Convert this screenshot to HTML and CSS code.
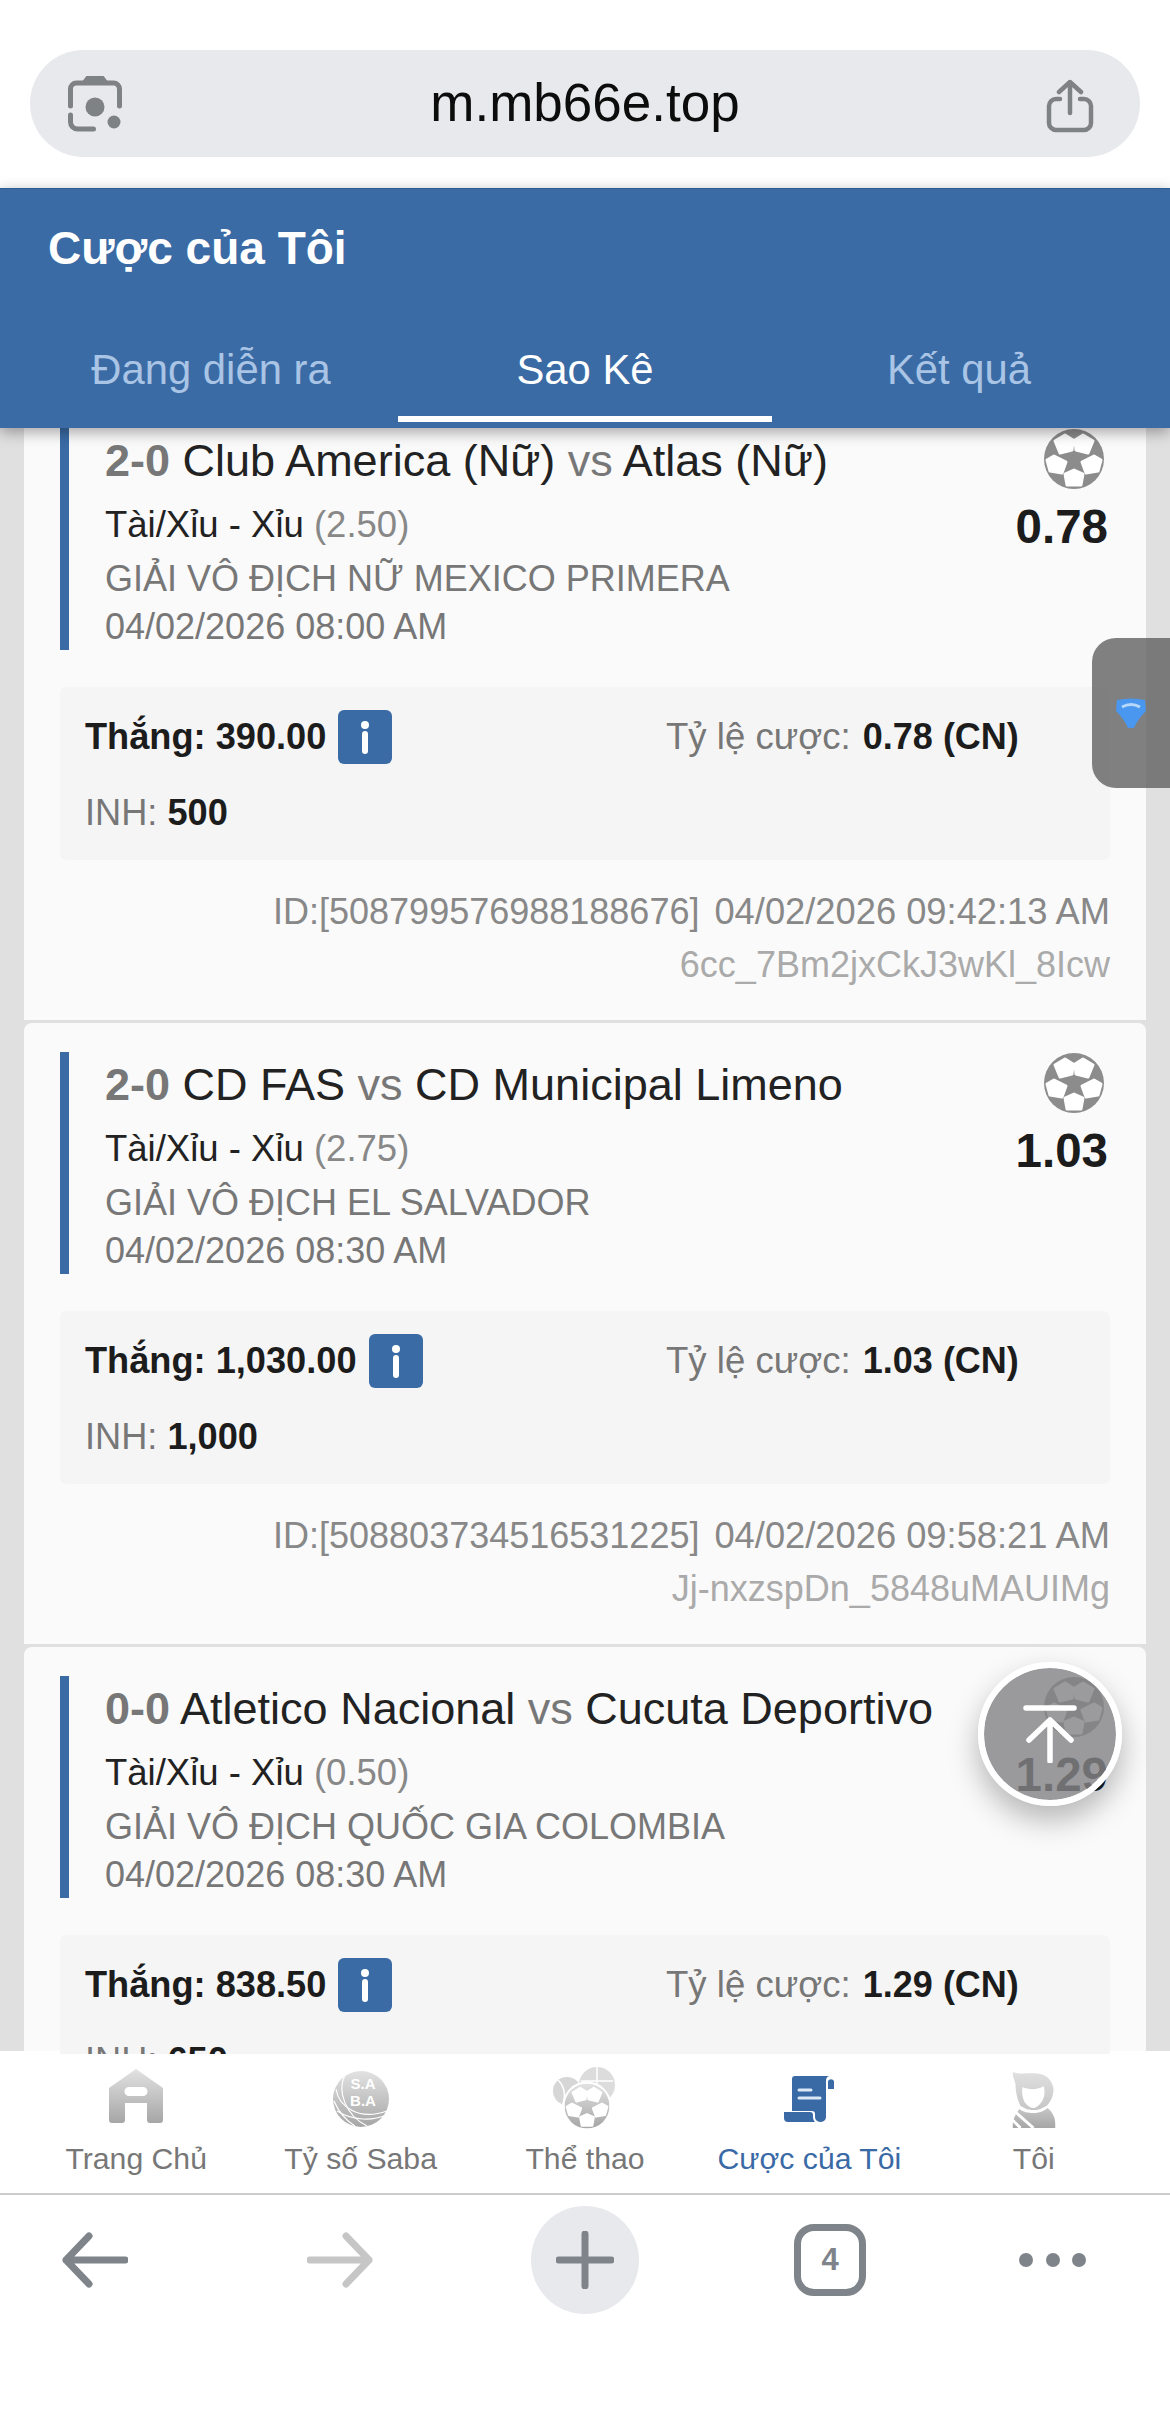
FILE: index.html
```html
<!DOCTYPE html>
<html lang="vi">
<head>
<meta charset="utf-8">
<title>Cược của Tôi</title>
<link rel="stylesheet" href="styles.css">
</head>
<body>
<svg class="defs" aria-hidden="true">
  <defs>
    <linearGradient id="navgrey" x1="0" y1="0" x2="0" y2="1">
      <stop offset="0" stop-color="#e2e2e2"/>
      <stop offset="1" stop-color="#a6a6a6"/>
    </linearGradient>
    <linearGradient id="hairgrey" x1="0" y1="0" x2="0" y2="1">
      <stop offset="0" stop-color="#e0e0e0"/>
      <stop offset="1" stop-color="#c6c6c6"/>
    </linearGradient>
    <linearGradient id="bodygrey" x1="0" y1="0" x2="0" y2="1">
      <stop offset="0" stop-color="#c6c6c6"/>
      <stop offset="1" stop-color="#a6a6a6"/>
    </linearGradient>
    <g id="ball-faces" fill="#fff" stroke="#fff" stroke-width="3" stroke-linejoin="round">
      <polygon points="11,12 21,6 29,11 28,21 16,24"/>
      <polygon points="49,12 39,6 31,11 32,21 44,24"/>
      <polygon points="10,27 3,31 6,42 18,44 22,33"/>
      <polygon points="50,27 57,31 54,42 42,44 38,33"/>
      <polygon points="30,41 21,45 23,56 37,56 39,45"/>
    </g>
    <symbol id="ball" viewBox="0 0 60 60">
      <circle cx="30" cy="30" r="30" fill="#8c8c8c"/>
      <use href="#ball-faces"/>
    </symbol>
    <symbol id="ball-nav" viewBox="0 0 60 60">
      <circle cx="30" cy="30" r="30" fill="url(#navgrey)"/>
      <use href="#ball-faces"/>
    </symbol>
  </defs>
</svg>
<div class="page">
  <div class="browser-top">
    <div class="urlbar">
      <svg class="lens" viewBox="0 0 54 56" fill="none" stroke="#7e8285" stroke-width="5" stroke-linecap="round" stroke-linejoin="round">
        <path d="M2.500 30V13a6 6 0 0 1 6-6h37a6 6 0 0 1 6 6v17"/>
        <path d="M17 6l3-4h14l3 4z" fill="#7e8285"/>
        <path d="M2.500 39v7a7 7 0 0 0 7 7h16"/>
        <circle cx="27" cy="31" r="9.500" fill="#7e8285" stroke="none"/>
        <circle cx="46" cy="46" r="6.500" fill="#7e8285" stroke="none"/>
      </svg>
      <span class="url">m.mb66e.top</span>
      <svg class="share" viewBox="0 0 48 54" fill="none" stroke="#7e8285" stroke-width="4.500" stroke-linecap="round" stroke-linejoin="round">
        <path d="M14 20H10a7 7 0 0 0-7 7v17a7 7 0 0 0 7 7h28a7 7 0 0 0 7-7V27a7 7 0 0 0-7-7h-4"/>
        <path d="M24 34V3M13 13L24 3l11 10"/>
      </svg>
    </div>
  </div>

  <div class="app">
    <header class="app-header">
      <h1 class="app-title">Cược của Tôi</h1>
      <div class="tabs">
        <div class="tab">Đang diễn ra</div>
        <div class="tab tab-active">Sao Kê</div>
        <div class="tab">Kết quả</div>
      </div>
    </header>

    <main class="list">
      <article class="card">
        <div class="match">
          <div class="match-info">
            <div class="teams"><b class="score">2-0</b> Club America (Nữ) <span class="vs">vs</span> Atlas (Nữ)</div>
            <div class="market">Tài/Xỉu - Xỉu <span class="line">(2.50)</span></div>
            <div class="league">GIẢI VÔ ĐỊCH NỮ MEXICO PRIMERA</div>
            <div class="league">04/02/2026 08:00 AM</div>
          </div>
          <div class="match-side">
            <svg class="ball"><use href="#ball"/></svg>
            <div class="odds">0.78</div>
          </div>
        </div>
        <div class="summary">
          <div class="summary-row">
            <div class="win"><b>Thắng: 390.00</b><svg class="info" viewBox="0 0 54 54"><circle cx="27" cy="15" r="4"/><path d="M27 24V41"/></svg></div>
            <div class="rate">Tỷ lệ cược: <b>0.78 (CN)</b></div>
          </div>
          <div class="stake">INH: <b>500</b></div>
        </div>
        <div class="ticket">ID:[508799576988188676] <span class="ticket-time">04/02/2026 09:42:13 AM</span></div>
        <div class="hash">6cc_7Bm2jxCkJ3wKl_8Icw</div>
      </article>

      <article class="card">
        <div class="match">
          <div class="match-info">
            <div class="teams"><b class="score">2-0</b> CD FAS <span class="vs">vs</span> CD Municipal Limeno</div>
            <div class="market">Tài/Xỉu - Xỉu <span class="line">(2.75)</span></div>
            <div class="league">GIẢI VÔ ĐỊCH EL SALVADOR</div>
            <div class="league">04/02/2026 08:30 AM</div>
          </div>
          <div class="match-side">
            <svg class="ball"><use href="#ball"/></svg>
            <div class="odds">1.03</div>
          </div>
        </div>
        <div class="summary">
          <div class="summary-row">
            <div class="win"><b>Thắng: 1,030.00</b><svg class="info" viewBox="0 0 54 54"><circle cx="27" cy="15" r="4"/><path d="M27 24V41"/></svg></div>
            <div class="rate">Tỷ lệ cược: <b>1.03 (CN)</b></div>
          </div>
          <div class="stake">INH: <b>1,000</b></div>
        </div>
        <div class="ticket">ID:[508803734516531225] <span class="ticket-time">04/02/2026 09:58:21 AM</span></div>
        <div class="hash">Jj-nxzspDn_5848uMAUIMg</div>
      </article>

      <article class="card">
        <div class="match">
          <div class="match-info">
            <div class="teams"><b class="score">0-0</b> Atletico Nacional <span class="vs">vs</span> Cucuta Deportivo</div>
            <div class="market">Tài/Xỉu - Xỉu <span class="line">(0.50)</span></div>
            <div class="league">GIẢI VÔ ĐỊCH QUỐC GIA COLOMBIA</div>
            <div class="league">04/02/2026 08:30 AM</div>
          </div>
          <div class="match-side">
            <svg class="ball"><use href="#ball"/></svg>
            <div class="odds">1.29</div>
          </div>
        </div>
        <div class="summary">
          <div class="summary-row">
            <div class="win"><b>Thắng: 838.50</b><svg class="info" viewBox="0 0 54 54"><circle cx="27" cy="15" r="4"/><path d="M27 24V41"/></svg></div>
            <div class="rate">Tỷ lệ cược: <b>1.29 (CN)</b></div>
          </div>
          <div class="stake">INH: <b>650</b></div>
        </div>
      </article>
    </main>

    <nav class="tabbar">
      <div class="nav-item">
        <svg class="nav-icon icon-home" viewBox="0 0 54 54"><path fill="url(#navgrey)" fill-rule="evenodd" d="M27 0L54 19V51a3 3 0 0 1-3 3H41a3 3 0 0 1-3-3V34H16V51a3 3 0 0 1-3 3H3a3 3 0 0 1-3-3V19zM20 18a4.500 4.500 0 0 0 0 9H34a4.500 4.500 0 0 0 0-9z"/></svg>
        <span>Trang Chủ</span>
      </div>
      <div class="nav-item">
        <svg class="nav-icon icon-saba" viewBox="0 0 56 56">
          <circle cx="28" cy="28" r="28" fill="url(#navgrey)"/>
          <g fill="none" stroke="#fff" stroke-width="1.200">
            <path d="M12 4C4 20 12 44 34 55"/>
            <path d="M3 18C6 36 26 50 54 40"/>
            <path d="M4 40C20 50 40 50 53 44"/>
            <path d="M1 30C6 42 14 50 22 55"/>
          </g>
          <text class="saba-text" x="30" y="18">S.A</text>
          <text class="saba-text" x="30" y="35">B.A</text>
        </svg>
        <span>Tỷ số Saba</span>
      </div>
      <div class="nav-item">
        <svg class="nav-icon icon-sports" viewBox="0 0 64 62">
          <circle cx="14" cy="24" r="14" fill="#d6d6d6"/>
          <path d="M5 13c6 6 8 14 5 24" fill="none" stroke="#fff" stroke-width="1.500"/>
          <circle cx="44" cy="18" r="18" fill="#dcdcdc"/>
          <path d="M44 0v30M28 14h32" fill="none" stroke="#fff" stroke-width="1.500"/>
          <circle cx="34" cy="39" r="24.500" fill="#fff"/>
          <use href="#ball-nav" x="11.500" y="16.500" width="45" height="45"/>
        </svg>
        <span>Thể thao</span>
      </div>
      <div class="nav-item nav-active">
        <svg class="nav-icon icon-bets" viewBox="0 0 50 46">
          <path fill="#3a6aa6" d="M11 0H45c-2 1-3 2-3 5V41a5 5 0 0 1-5 5h-1a5 5 0 0 1-5-5v-3a3 3 0 0 0-3-3H8V3a3 3 0 0 1 3-3z"/>
          <path fill="#3a6aa6" d="M0 36H26a3 3 0 0 1 3 3v2c0 2 1 4 2 5H4a4 4 0 0 1-4-4z"/>
          <path fill="#3a6aa6" d="M44 5a3.500 3.500 0 0 1 6 0V13H44z"/>
          <path d="M15 14h12M15 22h21" stroke="#dbe8f5" stroke-width="3" stroke-linecap="round"/>
        </svg>
        <span>Cược của Tôi</span>
      </div>
      <div class="nav-item">
        <svg class="nav-icon icon-me" viewBox="0 0 43 56">
          <path fill="url(#hairgrey)" d="M0 0C8 3 20 0 28 2C36 4 40 10 41 17C41 24 38 30 34 34L26 38H16L8 34C5 28 3 20 3 12C2 8 0 4 0 0z"/>
          <path fill="#fff" d="M10 15C16 18 26 18 31 14C33 20 32 26 29 30C26 34 23 36 21 36C18 36 15 34 12 30C10 26 9 20 10 15z"/>
          <path fill="url(#bodygrey)" d="M7 37C3 42 0 48 0 53V56H43V53C43 46 40 40 35 36C32 39 26 41 21 41C16 41 10 40 7 37z"/>
          <path d="M3 40L21 56M0 48L8 56" stroke="#fff" stroke-width="3" fill="none"/>
          <path d="M16 37q5 3 11 0v1.500q-5 3-11 0z" fill="#fff"/>
        </svg>
        <span>Tôi</span>
      </div>
    </nav>

    <div class="side-handle">
      <svg class="gem" viewBox="0 0 30 30"><path fill="#4a97ef" d="M1 2Q15-1 29 2L30 13Q22 21 18 30H12Q8 21 0 13z"/><path d="M6 9q9-5 18 0" fill="none" stroke="#b5d8fa" stroke-width="3"/></svg>
    </div>
    <button class="to-top" type="button" aria-label="Lên đầu trang">
      <svg viewBox="0 0 54 58" fill="none" stroke="#fff" stroke-width="5.500" stroke-linecap="round" stroke-linejoin="round">
        <path d="M3 3h48M27 56V15M6 35l21-20 21 20"/>
      </svg>
    </button>
  </div>

  <div class="browser-bottom">
    <svg class="tool tool-arrow" viewBox="0 0 66 56" fill="none" stroke="#7e8489" stroke-width="7" stroke-linecap="round" stroke-linejoin="round"><path d="M63 28H4M27 4L4 28l23 24"/></svg>
    <svg class="tool tool-arrow" viewBox="0 0 66 56" fill="none" stroke="#c6c6c6" stroke-width="7" stroke-linecap="round" stroke-linejoin="round"><path d="M3 28H62M39 4l23 24-23 24"/></svg>
    <div class="plus">
      <svg viewBox="0 0 58 58" fill="none" stroke="#7e8489" stroke-width="7" stroke-linecap="round"><path d="M29 3V55M3 29H55"/></svg>
    </div>
    <div class="tab-count">4</div>
    <div class="dots"><i></i><i></i><i></i></div>
  </div>
</div>
</body>
</html>
```

FILE: styles.css
```css
* { box-sizing: border-box; }
html, body { margin: 0; padding: 0; background: #fff; }
body { font-family: "Liberation Sans", Arial, sans-serif; color: #222; }
.defs { position: absolute; width: 0; height: 0; }
.page { width: 1170px; height: 2428px; display: flex; flex-direction: column; overflow: hidden; }

/* Browser chrome, top */
.browser-top { height: 188px; padding: 50px 30px 0; background: #fff; flex: none; }
.urlbar { height: 107px; border-radius: 54px; background: #e8e9ec; display: grid; grid-template-columns: 1fr auto 1fr; align-items: center; padding: 0 38px; }
.lens { width: 54px; height: 56px; }
.share { width: 48px; height: 54px; margin: 4px 8px 0 0; justify-self: end; }
.url { font-size: 53px; line-height: 60px; color: #0c0c0c; margin-bottom: 2px; }

/* App */
.app { flex: 1; min-height: 0; display: flex; flex-direction: column; position: relative; }
.app-header { height: 240px; flex: none; background: #3a6ba5; border-top: 1px solid #2f5c93; position: relative; z-index: 2; box-shadow: 0 4px 14px rgba(0, 0, 0, .35); display: flex; flex-direction: column; }
.app-title { margin: 0; padding: 30px 0 0 48px; font-size: 46px; line-height: 58px; font-weight: 700; color: #fff; }
.tabs { margin-top: auto; display: grid; grid-template-columns: repeat(3, 1fr); padding: 0 24px; }
.tab { height: 92px; padding-top: 4px; text-align: center; font-size: 41.8px; line-height: 60px; color: #a9c4e4; }
.tab-active { color: #fff; position: relative; }
.tab-active::after { content: ""; position: absolute; left: 0; right: 0; bottom: 6px; height: 6px; background: #fff; }

/* Bet list */
.list { flex: 1; min-height: 0; overflow: hidden; background: #e0e0e0; padding: 0 24px; }
.card { height: 621px; margin-bottom: 3px; padding: 29px 36px 0; background: #fafafa; border-radius: 8px 8px 0 0; }
.card:first-child { margin-top: -29px; }
.match { height: 222px; border-left: 9px solid #3a6ba5; padding: 1px 0 0 36px; display: flex; justify-content: space-between; }
.match-info { padding-top: 8px; }
.teams { font-size: 45px; line-height: 48px; margin-bottom: 16px; white-space: nowrap; color: #222; }
.score { color: #777; }
.vs { color: #777; }
.market { font-size: 36.5px; line-height: 48px; margin-bottom: 6px; color: #222; white-space: nowrap; }
.line { color: #888; }
.league { font-size: 36px; line-height: 48px; color: #777; white-space: nowrap; }
.match-side { display: flex; flex-direction: column; align-items: flex-end; }
.ball { width: 60px; height: 60px; margin-right: 6px; display: block; flex: none; }
.odds { font-size: 47.5px; line-height: 60px; font-weight: 700; margin: 8px 2px 0 0; color: #1c1c1c; }
.summary { height: 173px; margin-top: 37px; padding: 23px 25px 0; background: #f5f5f5; border-radius: 6px; }
.summary-row { display: grid; grid-template-columns: 581px 1fr; align-items: center; height: 54px; }
.win { display: flex; align-items: center; gap: 12px; font-size: 36.2px; color: #1c1c1c; white-space: nowrap; }
.info { width: 54px; height: 54px; border-radius: 6px; background: #3a6ba5; }
.info circle { fill: #fff; }
.info path { stroke: #fff; stroke-width: 6; stroke-linecap: round; fill: none; }
.rate { font-size: 36.6px; color: #777; white-space: nowrap; }
.rate b { font-size: 36px; margin-left: 2px; }
.rate b, .stake b { color: #1c1c1c; }
.stake { margin-top: 25px; font-size: 36.2px; line-height: 48px; color: #777; }
.ticket { margin-top: 28px; font-size: 36px; line-height: 48px; color: #888; text-align: right; white-space: nowrap; }
.ticket-time { font-size: 36.3px; margin-left: 5px; }
.hash { margin-top: 5px; font-size: 36px; line-height: 48px; color: #aaa; text-align: right; white-space: nowrap; }

/* Bottom tab bar */
.tabbar { height: 141px; flex: none; background: #fff; border-bottom: 2px solid #ccc; display: grid; grid-template-columns: repeat(5, 1fr); padding: 0 24px; position: relative; z-index: 1; }
.tabbar::before, .tabbar::after { content: ""; position: absolute; top: -3px; width: 60px; height: 3px; background: #fff; }
.tabbar::before { left: 0; }
.tabbar::after { right: 0; }
.nav-item { position: relative; display: flex; flex-direction: column; align-items: center; justify-content: flex-end; padding-bottom: 14px; font-size: 30.2px; line-height: 40px; color: #777; }
.nav-active { color: #3a6aa6; }
.nav-icon { position: absolute; left: 50%; transform: translateX(-50%); }
.icon-home { width: 54px; height: 54px; top: 15px; }
.icon-saba { width: 56px; height: 56px; top: 17px; }
.icon-sports { width: 64px; height: 62px; top: 13px; }
.icon-bets { width: 50px; height: 46px; top: 22px; }
.icon-me { width: 43px; height: 56px; top: 18px; }
.saba-text { font-family: "Liberation Sans", Arial, sans-serif; font-size: 15px; font-weight: 700; fill: #fff; text-anchor: middle; }

/* Floating controls */
.side-handle { position: absolute; z-index: 1; right: 0; top: 450px; width: 78px; height: 150px; border-radius: 24px 0 0 24px; background: rgba(91, 91, 91, .77); }
.gem { position: absolute; left: 24px; top: 60px; width: 30px; height: 30px; }
.to-top { position: absolute; z-index: 1; left: 978px; top: 1474px; width: 144px; height: 144px; padding: 0; border: 6px solid #fff; border-radius: 50%; background: rgba(132, 132, 136, .81); background-clip: padding-box; box-shadow: 0 14px 30px rgba(0, 0, 0, .28); display: flex; align-items: center; justify-content: center; }
.to-top svg { width: 54px; height: 58px; }

/* Browser chrome, bottom */
.browser-bottom { height: 233px; flex: none; background: #fff; display: grid; grid-template-columns: 62px 66px 179px 66px 158px 108px 155px 72px 153px 67px; grid-template-rows: 120px; align-items: center; padding-top: 5px; }
.tool-arrow { width: 66px; height: 56px; }
.browser-bottom > :nth-child(1) { grid-column: 2; }
.browser-bottom > :nth-child(2) { grid-column: 4; }
.browser-bottom > :nth-child(3) { grid-column: 6; }
.browser-bottom > :nth-child(4) { grid-column: 8; }
.browser-bottom > :nth-child(5) { grid-column: 10; }
.plus { width: 108px; height: 108px; border-radius: 50%; background: #e8e9ec; display: flex; align-items: center; justify-content: center; }
.plus svg { width: 58px; height: 58px; }
.tab-count { width: 72px; height: 72px; border: 7px solid #7e8489; border-radius: 20px; color: #7e8489; font-size: 31px; font-weight: 700; display: flex; align-items: center; justify-content: center; }
.dots { display: flex; justify-content: space-between; }
.dots i { width: 14px; height: 14px; border-radius: 50%; background: #7e8489; }
```
